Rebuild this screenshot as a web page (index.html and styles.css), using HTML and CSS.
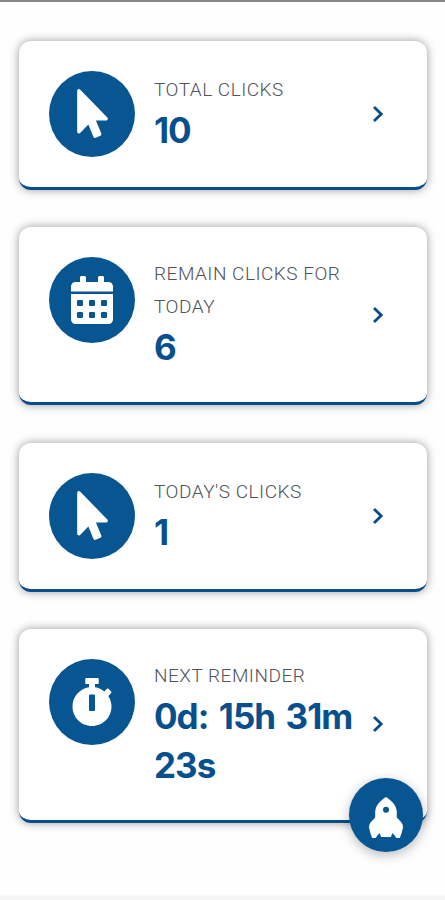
FILE: index.html
```html
<!DOCTYPE html>
<html lang="en">
<head>
<meta charset="utf-8">
<meta name="viewport" content="width=device-width, initial-scale=1">
<title>Clicks</title>
<link rel="stylesheet" href="styles.css">
</head>
<body>
<svg class="symbols" aria-hidden="true">
  <symbol id="pointer" viewBox="0 0 320 512"><path d="M302.189 329.126H196.105l55.831 135.993c3.889 9.428-.555 19.999-9.444 23.999l-49.165 21.427c-9.165 4-19.443-.571-23.332-9.714l-53.053-129.136-86.664 89.138C18.729 472.71 0 463.554 0 447.977V18.299C0 1.899 19.921-6.096 30.277 5.443l284.412 292.542c11.472 11.179 3.007 31.141-12.5 31.141z"/></symbol>
  <symbol id="chevron" viewBox="0 0 12 18"><path d="M2 2l7.2 7L2 16"/></symbol>
</svg>
<main class="cards">
  <a class="card">
    <span class="badge"><svg class="icon pointer"><use href="#pointer"/></svg></span>
    <div class="text"><div class="label">TOTAL CLICKS</div><div class="value">10</div></div>
    <svg class="chevron"><use href="#chevron"/></svg>
  </a>
  <a class="card">
    <span class="badge"><svg class="icon" viewBox="0 0 448 512"><path fill-rule="evenodd" d="M0 464c0 26.500 21.500 48 48 48h352c26.500 0 48-21.500 48-48V192H0zM76 256h40q12 0 12 12v40q0 12-12 12H76q-12 0-12-12v-40q0-12 12-12zM204 256h40q12 0 12 12v40q0 12-12 12h-40q-12 0-12-12v-40q0-12 12-12zM332 256h40q12 0 12 12v40q0 12-12 12h-40q-12 0-12-12v-40q0-12 12-12zM76 384h40q12 0 12 12v40q0 12-12 12H76q-12 0-12-12v-40q0-12 12-12zM204 384h40q12 0 12 12v40q0 12-12 12h-40q-12 0-12-12v-40q0-12 12-12zM332 384h40q12 0 12 12v40q0 12-12 12h-40q-12 0-12-12v-40q0-12 12-12z"/><path d="M400 64h-48V16c0-8.800-7.200-16-16-16h-32c-8.800 0-16 7.200-16 16v48H160V16c0-8.800-7.200-16-16-16h-32c-8.800 0-16 7.200-16 16v48H48C21.500 64 0 85.500 0 112v52h448v-52c0-26.500-21.500-48-48-48z"/></svg></span>
    <div class="text"><div class="label">REMAIN CLICKS FOR TODAY</div><div class="value">6</div></div>
    <svg class="chevron"><use href="#chevron"/></svg>
  </a>
  <a class="card">
    <span class="badge"><svg class="icon pointer"><use href="#pointer"/></svg></span>
    <div class="text"><div class="label">TODAY'S CLICKS</div><div class="value">1</div></div>
    <svg class="chevron"><use href="#chevron"/></svg>
  </a>
  <a class="card">
    <span class="badge"><svg class="icon" viewBox="0 0 448 512"><path fill-rule="evenodd" d="M432 304c0 114.900-93.100 208-208 208S16 418.900 16 304c0-104 76.300-190.200 176-205.500V64h-28c-6.600 0-12-5.400-12-12V12c0-6.600 5.400-12 12-12h120c6.600 0 12 5.400 12 12v40c0 6.600-5.400 12-12 12h-28v34.500c37.500 5.800 71.700 21.600 99.700 44.600l27.500-27.500c4.700-4.700 12.300-4.700 17 0l28.300 28.300c4.700 4.700 4.700 12.300 0 17l-30 30C419.700 223.300 432 262.200 432 304zm-176 36V188.500c0-6.600-5.400-12-12-12h-40c-6.600 0-12 5.400-12 12V340c0 6.600 5.400 12 12 12h40c6.600 0 12-5.400 12-12z"/></svg></span>
    <div class="text"><div class="label">NEXT REMINDER</div><div class="value">0d: 15h 31m 23s</div></div>
    <svg class="chevron"><use href="#chevron"/></svg>
  </a>
</main>
<a class="launch" aria-label="Launch">
  <svg class="rocket" viewBox="0 0 36 42"><path fill-rule="evenodd" d="M18 0C14 2.500 7.200 8 7.200 15V20.500L2.500 25.500Q1 27.500 1 30.500Q2 36 4.200 41H7.700Q9.500 37.500 12 36Q12 38 13.200 40H22.800Q24 38 24 36Q26.500 37.500 28.300 41H31.800Q34 36 35 30.500Q35 27.500 33.500 25.500L28.800 20.500V15C28.800 8 22 2.500 18 0zM18 9.700a3 3 0 1 1 0 6a3 3 0 1 1 0-6z"/></svg>
</a>
</body>
</html>
```
FILE: styles.css
```css
* { box-sizing: border-box; }

body {
  margin: 0;
  min-height: 900px;
  border-top: 2px solid #858585;
  background: linear-gradient(#fefefe 895px, #f5f5f5 896px);
  font-family: Roboto, "Liberation Sans", sans-serif;
}

.symbols { position: absolute; width: 0; height: 0; }

.cards {
  display: flex;
  flex-direction: column;
  gap: 37.300px;
  padding: 38.500px 18px 0 19px;
}

.card {
  display: flex;
  align-items: center;
  padding: 30px;
  border-bottom: 3px solid #084d89;
  border-radius: 12px;
  background: #fff;
  box-shadow: 0 0 10px rgba(0, 0, 0, .4);
}

.badge {
  display: flex;
  align-items: center;
  justify-content: center;
  align-self: flex-start;
  flex: none;
  width: 86px;
  height: 86px;
  margin-right: 19px;
  border-radius: 50%;
  background: #075692;
}

.icon { width: 42px; height: 48px; fill: #fff; }
.pointer { width: 31px; height: 49px; }

.text { flex: 1; min-width: 0; }

.label {
  color: #505357;
  font-size: 19px;
  font-weight: 300;
  letter-spacing: .5px;
  line-height: 33.500px;
}

.value {
  margin-top: -.5px;
  color: #084f8d;
  font-family: Inter, "Liberation Sans", sans-serif;
  font-size: 35px;
  font-weight: 700;
  letter-spacing: -1px;
  word-spacing: 3.200px;
  line-height: 49px;
}

.chevron {
  flex: none;
  width: 12px;
  height: 18px;
  margin: 0 13px 0 5px;
  fill: none;
  stroke: #084b87;
  stroke-width: 2.800px;
}

.launch {
  position: fixed;
  left: 349px;
  top: 778px;
  display: flex;
  align-items: center;
  justify-content: center;
  width: 74px;
  height: 74px;
  border-radius: 50%;
  background: #075692;
  box-shadow: 0 3px 12px rgba(0, 0, 0, .28);
}

.rocket { width: 36px; height: 42px; margin-top: 6px; fill: #fff; }
```
